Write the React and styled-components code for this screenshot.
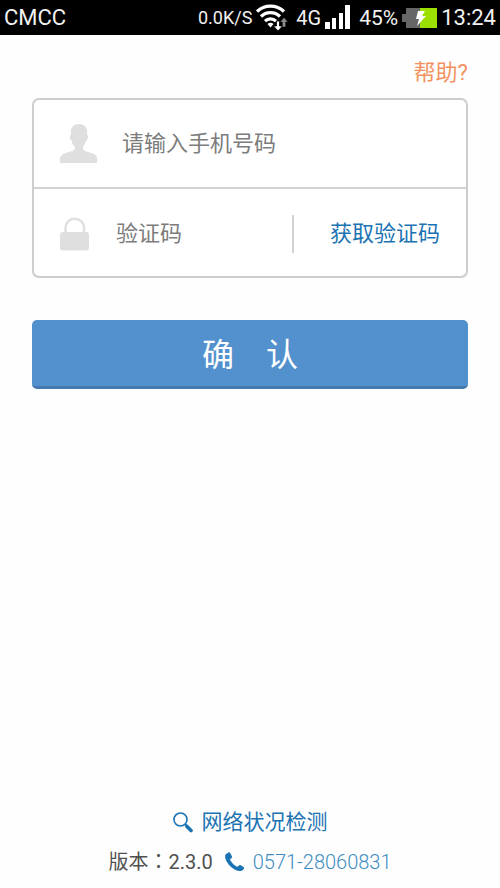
import React, { useState } from 'react';
import styled, { createGlobalStyle } from 'styled-components';

const GlobalStyle = createGlobalStyle`
  * {
    box-sizing: border-box;
  }
  body {
    margin: 0;
    background-color: #fefefe;
    font-family: Roboto, "Noto Sans CJK SC", sans-serif;
  }
  input, button {
    font-family: inherit;
  }
`;

function WifiIcon() {
  return (
    <svg width="32" height="28" viewBox="0 0 32 28" aria-hidden="true">
      <g fill="none" stroke="#fff" strokeWidth="3.200">
        <path d="M1 7.500A19.500 19.500 0 0 1 28 7.500" />
        <path d="M5 12.500A13.500 13.500 0 0 1 24 12.500" />
        <path d="M9 17.200A7.800 7.800 0 0 1 20 17.200" />
      </g>
      <path d="M11.500 20q3-2.500 6 0l-3 3.500z" fill="#fff" />
      <path d="M20.500 17h3v5h3l-4.500 5-4.500-5h3z" fill="#fff" stroke="#000" strokeWidth="0.800" />
      <path d="M28 13.500l4 4.500h-2.300v5h-3.400v-5H24z" fill="#8a8a8a" stroke="#000" strokeWidth="0.500" />
    </svg>
  );
}

function SignalIcon() {
  return (
    <svg width="26" height="26" viewBox="0 0 26 26" fill="#fff" aria-hidden="true">
      <path d="M0 17h5v7H0zM7 13h4v11H7zM14 8h4v16h-4zM20 0h5v24h-5z" />
    </svg>
  );
}

function BatteryIcon() {
  return (
    <svg width="35" height="20" viewBox="0 0 35 20" aria-hidden="true">
      <path d="M0 6h4V0h14v20H4v-6H0z" fill="#666" />
      <path d="M18 0h17v20H18z" fill="#9be000" />
      <path d="M16 3h7l-3 5h4L15 18l2-7h-3z" fill="#fff" />
    </svg>
  );
}

function UserIcon() {
  return (
    <svg width="38" height="40" viewBox="0 0 38 40" fill="#dfdfdf" aria-hidden="true">
      <path d="M11 11C10 4 13 0 19 0s9 4 8 11c2 0 1 5-1 6-1 3-2 4-3 6 0 3 1 4 5 5 6 1.500 9 3 9 7v4H0v-4c0-4 4-5.500 9-7 4-1 6-2 6-5-2-2-3-3-3-6-2-1-3-6-1-6z" />
    </svg>
  );
}

function LockIcon() {
  return (
    <svg width="30" height="34" viewBox="0 0 30 34" aria-hidden="true">
      <path d="M5.500 16V11a9.250 9.250 0 0 1 18.500 0v5" fill="none" stroke="#dfdfdf" strokeWidth="2.500" />
      <rect x="0" y="15" width="29" height="18.500" rx="3" fill="#dfdfdf" />
    </svg>
  );
}

function SearchIcon() {
  return (
    <svg width="20" height="21" viewBox="0 0 20 21" fill="none" stroke="#1b73b3" aria-hidden="true">
      <circle cx="7.500" cy="7.500" r="6.500" strokeWidth="1.600" />
      <path d="M12 12l2 2" strokeWidth="2" />
      <path d="M14 14.500l4 4" strokeWidth="3.600" strokeLinecap="round" />
    </svg>
  );
}

function PhoneIcon() {
  return (
    <svg width="20" height="20" viewBox="0 0 20 20" fill="#1b73b3" aria-hidden="true">
      <path d="M1 2L3.500 0.500Q4.500 0 5.200 1L7 4.500Q7.300 5.500 6.300 6.200L5.300 7Q5 7.500 5.500 8.500C7 11 9 13 11.500 14.500Q12.400 15 13 14.300L14 13.400Q14.800 12.800 15.800 13.300L18.500 15Q19.500 15.700 18.900 16.700C17.800 18.500 16 19.500 13.500 18.900C7.500 17.500 2 12 0.400 6.500C-0.100 4.500 0 3 1 2z" />
    </svg>
  );
}

export default function App() {
  const [formvalue, setFormValue] = useState({
    phone: '',
    code: '',
  });

  const handleChange = (e) =>
    setFormValue({
      ...formvalue,
      [e.target.name]: e.target.value,
    });

  return (
    <Page>
      <GlobalStyle />
      <StatusBar>
        <Carrier>CMCC</Carrier>
        <Speed>0.0K/S</Speed>
        <WifiIcon />
        <Network>4G</Network>
        <SignalIcon />
        <Battery>
          45%
          <BatteryIcon />
        </Battery>
        <span>13:24</span>
      </StatusBar>
      <Main>
        <HelpLink href="#help">帮助?</HelpLink>
        <form onSubmit={(e) => e.preventDefault()}>
          <Fields>
            <Row>
              <FieldLabel htmlFor="phone" $gap="24px">
                <UserIcon />
              </FieldLabel>
              <Field
                id="phone"
                type="tel"
                name="phone"
                aria-label="手机号码"
                placeholder="请输入手机号码"
                value={formvalue.phone}
                onChange={handleChange}
              />
            </Row>
            <Row>
              <FieldLabel htmlFor="code" $gap="26px">
                <LockIcon />
              </FieldLabel>
              <Field
                id="code"
                type="text"
                name="code"
                aria-label="验证码"
                placeholder="验证码"
                value={formvalue.code}
                onChange={handleChange}
              />
              <CodeCell>
                <CodeButton type="button">获取验证码</CodeButton>
              </CodeCell>
            </Row>
          </Fields>
          <SubmitButton type="submit">确{'\u3000'}认</SubmitButton>
        </form>
      </Main>
      <Footer>
        <NetworkCheck href="#network">
          <SearchIcon />
          网络状况检测
        </NetworkCheck>
        <Info>
          <span>版本：2.3.0</span>
          <PhoneLink href="tel:0571-28060831">
            <PhoneIcon />
            0571-28060831
          </PhoneLink>
        </Info>
      </Footer>
    </Page>
  );
}

const Page = styled.div`
  display: flex;
  flex-direction: column;
  min-height: 100vh;
`;

const StatusBar = styled.header`
  display: flex;
  align-items: center;
  height: 35px;
  padding: 0 4px;
  background-color: #000;
  color: #f2f2f2;
  font-size: 22px;
  white-space: nowrap;
  svg {
    flex: none;
  }
`;

const Carrier = styled.span`
  flex: 1;
`;

const Speed = styled.span`
  margin-right: 4px;
  font-size: 18px;
`;

const Network = styled.span`
  margin: 0 4px 0 8px;
  font-size: 20px;
`;

const Battery = styled.span`
  display: flex;
  align-items: center;
  gap: 4px;
  margin: 0 4px 0 8px;
  font-size: 21px;
`;

const Main = styled.main`
  display: flex;
  flex: 1;
  flex-direction: column;
  padding: 22px 32px;
`;

const HelpLink = styled.a`
  align-self: flex-end;
  margin-bottom: 9px;
  color: #f39260;
  font-size: 22px;
  line-height: 32px;
  text-decoration: none;
`;

const Fields = styled.div`
  border: 2px solid #cdcdcd;
  border-radius: 7px;
  background-color: #fff;
`;

const Row = styled.div`
  display: flex;
  align-items: center;
  height: 87px;
  padding: 0 26px;
  & + & {
    height: 89px;
    padding-top: 2px;
    border-top: 2px solid #d2d2d2;
  }
`;

const FieldLabel = styled.label`
  display: flex;
  flex: none;
  margin-right: ${({ $gap }) => $gap};
`;

const Field = styled.input`
  flex: 1;
  min-width: 0;
  height: 48px;
  padding: 0;
  border: none;
  outline: none;
  background: none;
  color: #333;
  font-size: 22px;
  &::placeholder {
    color: #7c7c7c;
    opacity: 1;
  }
`;

const CodeCell = styled.div`
  display: flex;
  align-items: center;
  height: 38px;
  padding-left: 36px;
  border-left: 2px solid #d2d2d2;
`;

const CodeButton = styled.button`
  padding: 0;
  border: none;
  background: none;
  color: #1b73b3;
  font-size: 22px;
  line-height: 32px;
  cursor: pointer;
`;

const SubmitButton = styled.button`
  width: 100%;
  height: 69px;
  margin-top: 42px;
  padding: 0 0 2px;
  border: none;
  border-bottom: 3px solid #4379ae;
  border-radius: 5px;
  background-color: #5291cd;
  color: #fff;
  font-size: 32px;
  cursor: pointer;
`;

const Footer = styled.footer`
  display: flex;
  flex-direction: column;
  align-items: center;
  gap: 8px;
  padding-bottom: 10px;
  font-size: 21px;
  line-height: 32px;
`;

const NetworkCheck = styled.a`
  display: flex;
  align-items: center;
  gap: 9px;
  color: #1b73b3;
  text-decoration: none;
`;

/* the TC face centres the full-width colon */
const Info = styled.div`
  display: flex;
  gap: 12px;
  color: #505050;
  font-family: Roboto, "Noto Sans CJK TC", sans-serif;
  font-size: 20px;
`;

const PhoneLink = styled.a`
  display: flex;
  align-items: center;
  gap: 8px;
  color: #3d8dc2;
  font-weight: 300;
  text-decoration: none;
`;
